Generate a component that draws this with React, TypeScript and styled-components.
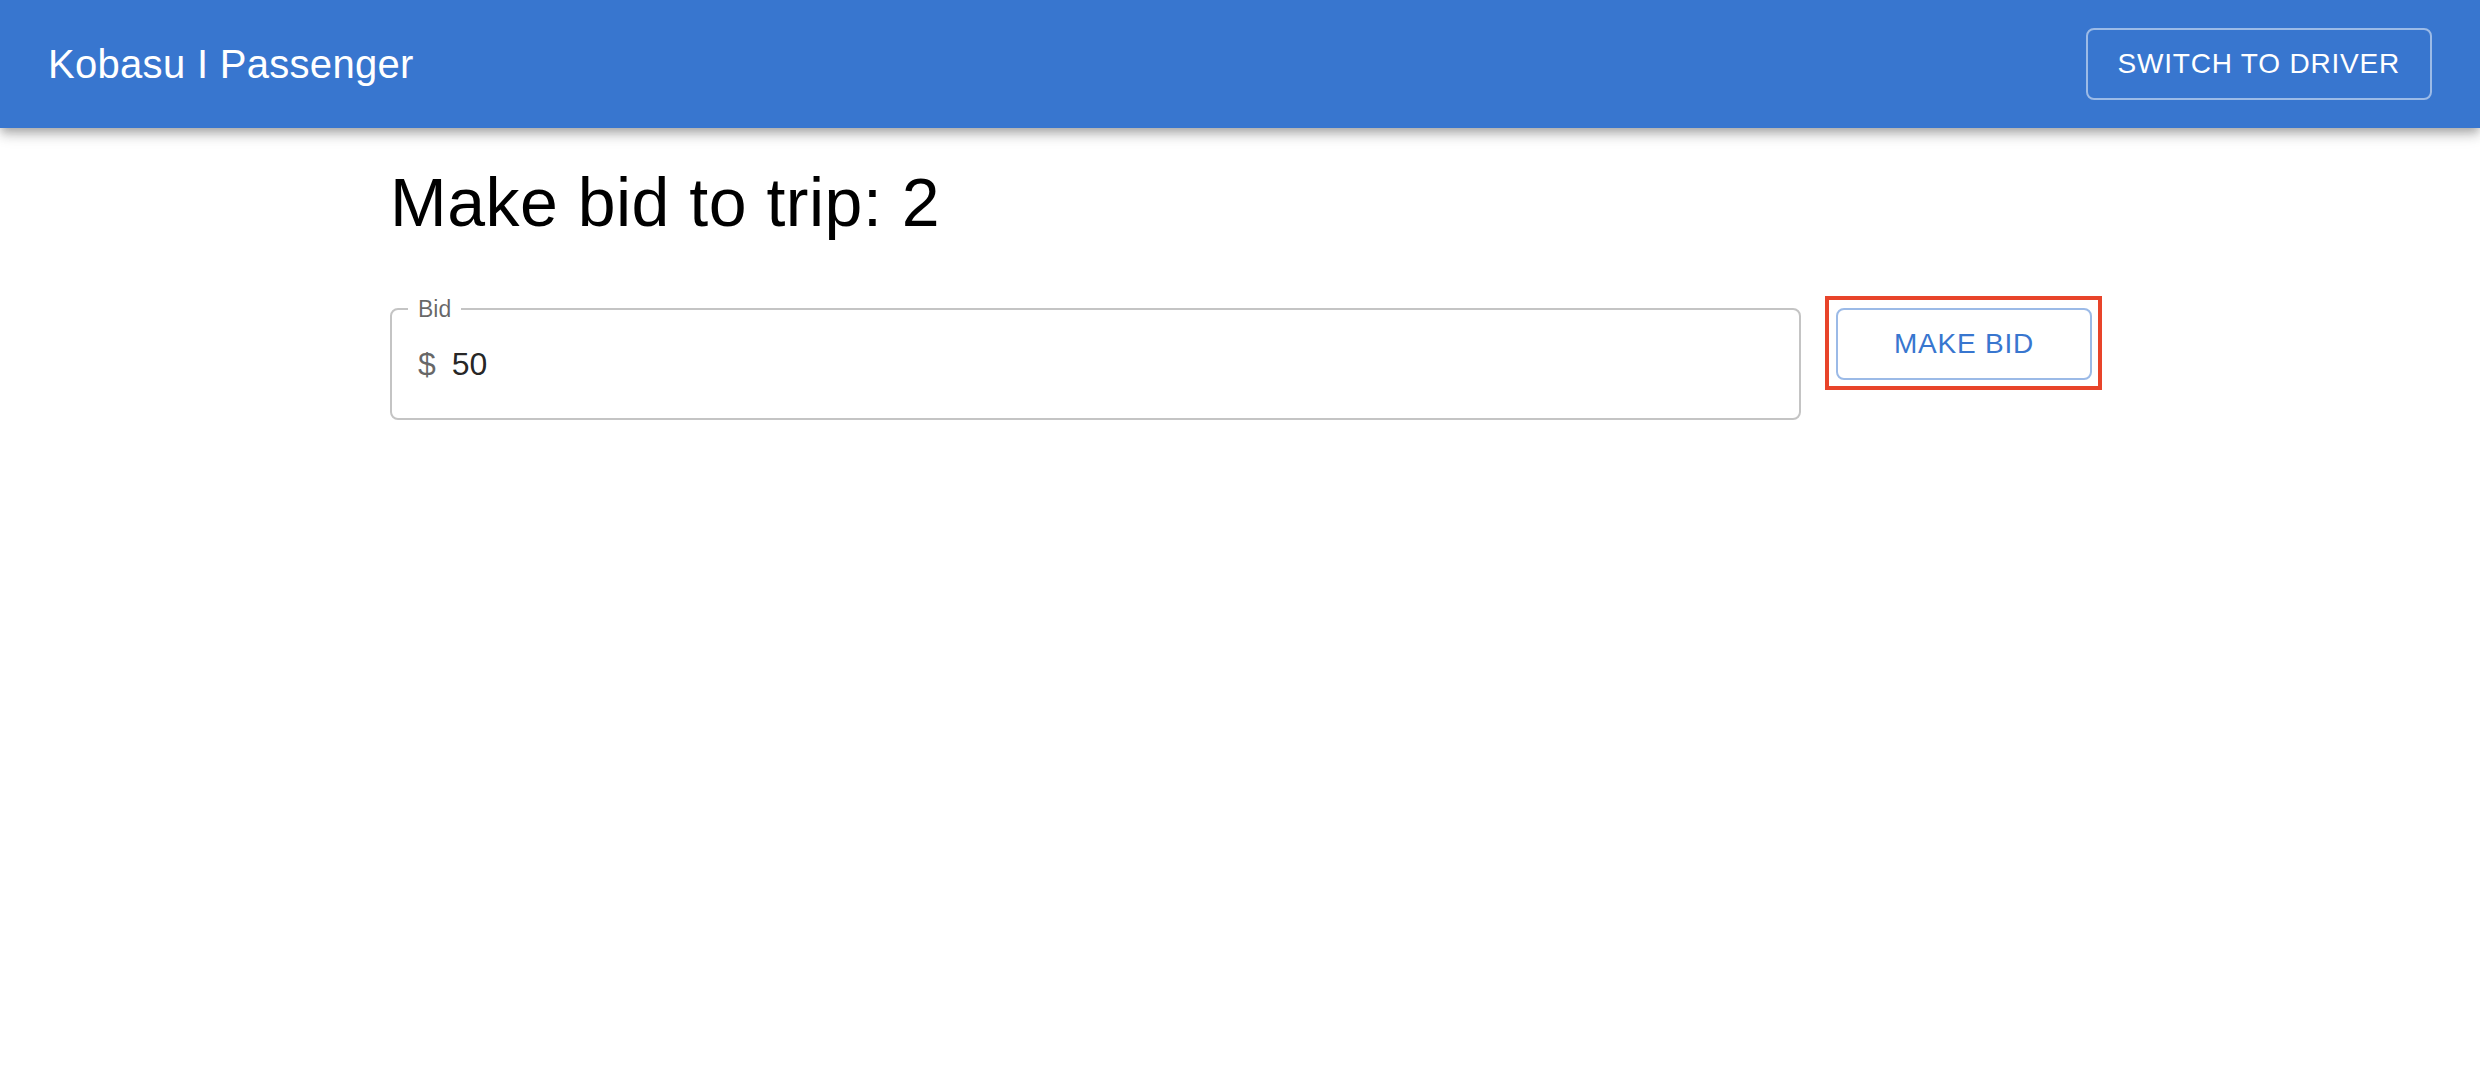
import styled, { createGlobalStyle } from 'styled-components';

const primary = '#3876cf';

const GlobalStyle = createGlobalStyle`
  html, body {
    margin: 0;
    padding: 0;
    background: #fff;
    font-family: 'Liberation Sans', Arial, Helvetica, sans-serif;
  }
`;

const AppBar = styled.header`
  position: relative;
  z-index: 2;
  height: 128px;
  background-color: ${primary};
  color: #fff;
  box-shadow: 0 4px 8px -2px rgb(0 0 0 / 0.2), 0 8px 10px 0 rgb(0 0 0 / 0.14),
    0 2px 20px 0 rgb(0 0 0 / 0.12);
`;

const Toolbar = styled.div`
  height: 100%;
  display: flex;
  flex-direction: row;
  align-items: center;
  justify-content: space-between;
  padding: 0 48px;
  box-sizing: border-box;
`;

const Brand = styled.div`
  font-size: 40px;
  line-height: 64px;
  font-weight: 400;
  letter-spacing: 0.3px;
`;

const OutlinedButton = styled.button<{ $light?: boolean; $highlight?: boolean }>`
  position: relative;
  box-sizing: border-box;
  height: 72px;
  padding: 10px 30px;
  border-radius: 8px;
  border: 2px solid
    ${(p) => (p.$light ? 'rgb(255 255 255 / 0.5)' : 'rgb(56 118 207 / 0.5)')};
  background: transparent;
  color: ${(p) => (p.$light ? '#fff' : primary)};
  font-family: 'Liberation Sans', Arial, sans-serif;
  font-size: 28px;
  line-height: 48px;
  font-weight: 400;
  letter-spacing: 0.8px;
  text-transform: uppercase;
  cursor: pointer;

  /* red highlight frame from the screenshot annotation */
  ${(p) =>
    p.$highlight &&
    `&::after {
      content: '';
      position: absolute;
      top: -14px;
      left: -13px;
      right: -12px;
      bottom: -12px;
      border: 4px solid #e8442a;
      pointer-events: none;
    }`}
`;

const Main = styled.main`
  max-width: 1800px;
  margin: 0 auto;
  padding: 0 48px;
  box-sizing: border-box;
`;

const Title = styled.h4`
  margin: 32px 0 64px 2px;
  font-size: 68px;
  line-height: 84px;
  font-weight: 400;
  letter-spacing: 0.5px;
  color: #000;
`;

const FormRow = styled.div`
  display: grid;
  grid-template-columns: 1fr 256px;
  column-gap: 35px;
  align-items: start;
  padding-left: 2px;
`;

const Field = styled.fieldset`
  box-sizing: border-box;
  height: 112px;
  margin: 0;
  min-width: 0;
  padding: 0 26px;
  border: 2px solid #c4c4c4;
  border-radius: 8px;
  display: flex;
  align-items: center;
`;

const Label = styled.legend`
  margin-left: -10px;
  padding: 0 10px;
  font-size: 23px;
  line-height: 0;
  color: rgb(0 0 0 / 0.6);
`;

const Adornment = styled.span`
  margin-right: 16px;
  font-size: 32px;
  color: rgb(0 0 0 / 0.6);
`;

const Input = styled.input`
  flex: 1;
  min-width: 0;
  border: none;
  outline: none;
  padding: 0;
  background: transparent;
  font-family: 'Liberation Sans', Arial, sans-serif;
  font-size: 32px;
  color: rgb(0 0 0 / 0.87);
`;

const App = () => {
  return (
    <>
      <GlobalStyle />
      <AppBar>
        <Toolbar>
          <Brand>Kobasu I Passenger</Brand>
          <OutlinedButton $light>Switch to driver</OutlinedButton>
        </Toolbar>
      </AppBar>
      <Main>
        <Title>Make bid to trip: 2</Title>
        <FormRow>
          <Field>
            <Label>Bid</Label>
            <Adornment>$</Adornment>
            <Input defaultValue={'50'} />
          </Field>
          <OutlinedButton $highlight>Make bid</OutlinedButton>
        </FormRow>
      </Main>
    </>
  );
};

export default App;
